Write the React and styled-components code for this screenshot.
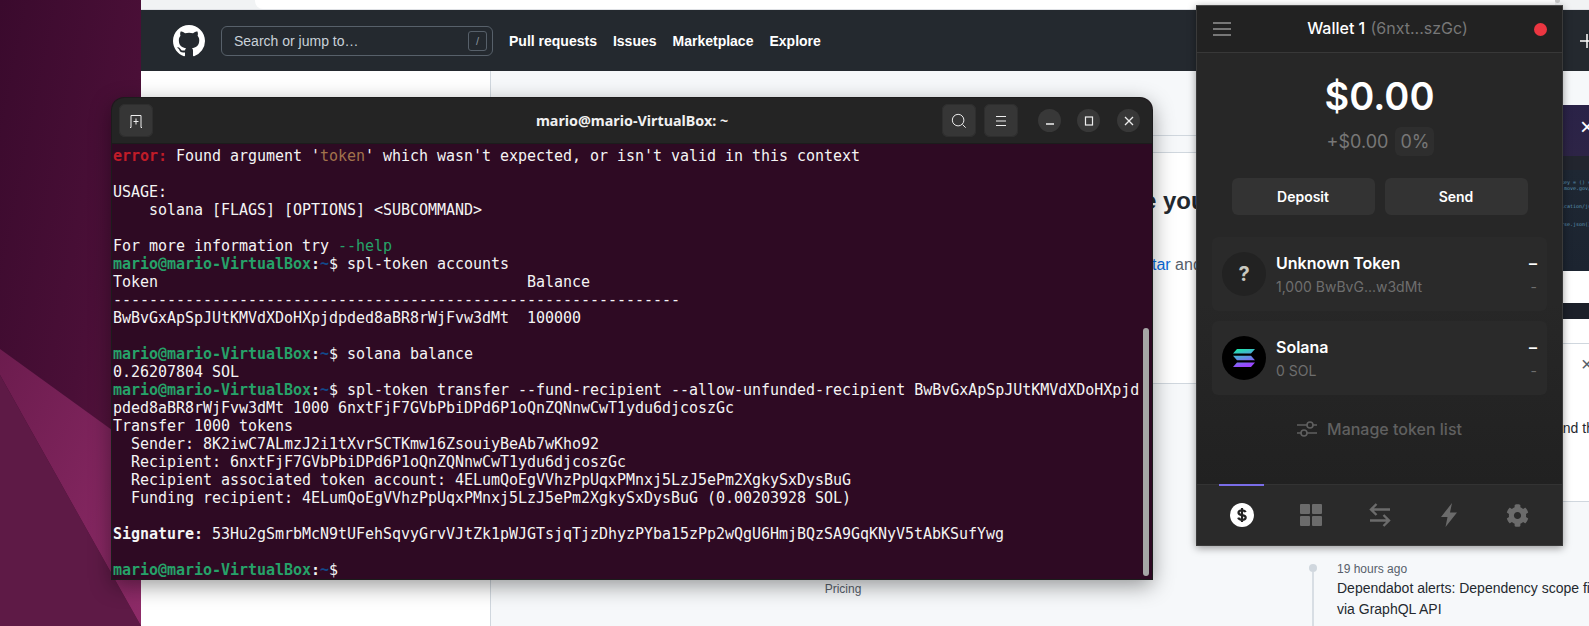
import React from "react";
import styled, { createGlobalStyle } from "styled-components";
import { FaCog } from "react-icons/fa";

const Global = createGlobalStyle`
  html, body { margin: 0; padding: 0; background: #fff; overflow: hidden; }
  * { box-sizing: border-box; }
`;

const Desktop = styled.div`
  position: relative;
  width: 1589px;
  height: 626px;
  overflow: hidden;
  display: flex;
  font-family: "Liberation Sans", Arial, sans-serif;
`;
const Wallpaper = styled.svg`
  flex: 0 0 141px;
  width: 141px;
  height: 626px;
  display: block;
`;
const Browser = styled.div`
  flex: 1;
  min-width: 0;
  display: flex;
  flex-direction: column;
  background: #fff;
`;
const TabStrip = styled.div`
  height: 10px;
  flex: none;
  display: flex;
  background: #f1f3f4;
  border-bottom: 1px solid #dfe1e5;
`;
const ActiveTab = styled.div`
  flex: 0 0 1300px;
  margin-left: 114px;
  background: #fff;
  border-bottom-left-radius: 8px;
`;
const AvatarEdge = styled.div`
  width: 19px;
  height: 3px;
  margin-left: auto;
  margin-right: 29px;
  background: #c9c9c9;
  border-radius: 0 0 10px 10px;
`;
const GitHubBar = styled.header`
  flex: none;
  height: 61px;
  background: #24292f;
  display: flex;
  align-items: center;
  padding: 0 0 0 32px;
`;
const SearchBox = styled.div`
  width: 272px;
  height: 30px;
  margin-left: 16px;
  margin-right: 16px;
  border: 1px solid #57606a;
  border-radius: 6px;
  display: flex;
  align-items: center;
  justify-content: space-between;
  padding: 0 5px 0 12px;
  color: #c9d1d9;
  font-size: 14px;
`;
const SlashKey = styled.span`
  width: 19px;
  height: 20px;
  border: 1px solid #57606a;
  border-radius: 3px;
  display: flex;
  align-items: center;
  justify-content: center;
  font-size: 11px;
  color: #8b949e;
`;
const NavLink = styled.a`
  color: #fff;
  font-size: 14px;
  font-weight: 700;
  margin-right: 16px;
  white-space: nowrap;
`;
const PlusIcon = styled.svg`
  margin-left: auto;
  margin-right: -6px;
  flex: none;
`;
const Content = styled.div`
  flex: 1;
  min-height: 0;
  display: flex;
`;
const Sidebar = styled.aside`
  flex: 0 0 350px;
  background: #fff;
  border-right: 1px solid #d0d7de;
`;
const Main = styled.main`
  flex: 1;
  min-width: 0;
  background: #f6f8fa;
  display: flex;
  overflow: hidden;
`;
const FeedColumn = styled.section`
  flex: 0 0 710px;
  min-width: 0;
  padding-top: 64px;
`;
const FeedStrip = styled.div`
  height: 17px;
  border-top: 1px solid #d0d7de;
`;
const FeedCard = styled.div`
  height: 232px;
  background: #fff;
  border-top: 1px solid #d0d7de;
  border-bottom: 1px solid #d0d7de;
  padding: 32px 0 0 652px;
  white-space: nowrap;
  overflow: hidden;
`;
const CardHeading = styled.h2`
  margin: 0;
  font-size: 24px;
  line-height: 32px;
  font-weight: 700;
  color: #24292f;
`;
const CardText = styled.p`
  margin: 36px 0 0 9px;
  font-size: 16px;
  line-height: 24px;
  color: #57606a;
`;
const CardLink = styled.a`
  color: #0969da;
`;
const PricingRow = styled.div`
  margin-top: 198px;
  padding-right: 6px;
  text-align: center;
  font-size: 12px;
  line-height: 14px;
  color: #57606a;
`;
const SideColumn = styled.section`
  flex: 0 0 400px;
  margin-left: 108px;
  padding-top: 34px;
`;
const PromoCard = styled.div`
  height: 397px;
  background: #fff;
  border-bottom: 1px solid #d0d7de;
`;
const PromoImage = styled.div`
  position: relative;
  height: 166px;
  background: linear-gradient(180deg, #2a2247 0%, #2d2446 31%, #22252e 31%, #22252e 39%, #1e2733 39%, #1c2430 100%);
`;
const PromoClose = styled.span`
  position: absolute;
  left: 271px;
  top: 10px;
  color: #fff;
  font-size: 24px;
  line-height: 24px;
`;
const PromoCode = styled.pre`
  margin: 0;
  position: absolute;
  left: 252px;
  top: 74px;
  font: 5px/6px "DejaVu Sans Mono", monospace;
  color: #5d95b5;
`;
const PromoBand = styled.div`
  height: 16px;
  margin-top: 32px;
  background: #1c2029;
`;
const PromoFoot = styled.div`
  height: 25px;
  border-bottom: 1px solid #d0d7de;
`;
const PromoBody = styled.div`
  display: flex;
  flex-direction: column;
  padding: 12px 0 0 246px;
  white-space: nowrap;
  font-size: 14px;
  color: #24292f;
`;
const PromoDismiss = styled.span`
  margin-left: 26px;
  height: 17px;
  font-size: 20px;
  line-height: 17px;
  color: #57606a;
`;
const PromoLine = styled.span`
  margin-top: 47px;
  line-height: 17px;
`;
const Timeline = styled.div`
  margin-top: 60px;
  padding-left: 28px;
  position: relative;
  display: flex;
  flex-direction: column;
  white-space: nowrap;
`;
const TimelineDot = styled.i`
  position: absolute;
  left: 0;
  top: 2px;
  width: 8px;
  height: 8px;
  border-radius: 50%;
  background: #d0d7de;
  &::after {
    content: "";
    position: absolute;
    left: 3px;
    top: 8px;
    width: 2px;
    height: 70px;
    background: #d8dee4;
  }
`;
const TimeAgo = styled.span`
  font-size: 12px;
  line-height: 14px;
  color: #57606a;
`;
const TimelineText = styled.span`
  margin-top: 2px;
  font-size: 14px;
  line-height: 21px;
  color: #24292f;
`;

/* Terminal window */
const TerminalWindow = styled.div`
  position: absolute;
  left: 112px;
  top: 98px;
  width: 1040px;
  height: 481px;
  display: flex;
  flex-direction: column;
  border-radius: 12px 12px 0 0;
  overflow: hidden;
  background: #2e0a23;
  box-shadow: 0 0 0 1px #1c1c1c, 0 6px 22px rgba(0, 0, 0, 0.42);
`;
const TermBar = styled.div`
  flex: none;
  height: 46px;
  background: #242424;
  border-bottom: 1px solid #1c1c1c;
  display: flex;
  align-items: center;
  padding: 0 12px 0 7px;
`;
const TermButton = styled.span`
  width: ${(p) => p.$w}px;
  height: 33px;
  margin-left: ${(p) => p.$gap || 0}px;
  border-radius: 6px;
  background: #363636;
  box-shadow: inset 0 0 0 1px #2e2e2e;
  display: flex;
  align-items: center;
  justify-content: center;
  flex: none;
`;
const TermTitle = styled.div`
  flex: 1;
  text-align: center;
  padding-left: 169px;
  color: #f0f0f0;
  font: 700 14.3px "Noto Sans", sans-serif;
`;
const WinCircle = styled.span`
  width: 23px;
  height: 23px;
  border-radius: 50%;
  background: #383838;
  margin-left: ${(p) => p.$gap}px;
  display: flex;
  align-items: center;
  justify-content: center;
  flex: none;
`;
const TermBody = styled.pre`
  position: relative;
  flex: 1;
  margin: 0;
  padding: 3px 0 0 1px;
  font-family: "DejaVu Sans Mono", monospace;
  font-size: 15px;
  letter-spacing: -0.03px;
  line-height: 18px;
  color: #f4f4f4;
  overflow: hidden;
`;
const Green = styled.b`
  color: #26a269;
`;
const Blue = styled.b`
  color: #12488b;
`;
const Red = styled.b`
  color: #c01c28;
`;
const Brown = styled.span`
  color: #a2734c;
`;
const HelpFlag = styled.span`
  color: #26a269;
`;
const Scrollbar = styled.div`
  position: absolute;
  right: 3px;
  top: 184px;
  width: 6px;
  height: 248px;
  border-radius: 3px;
  background: #a6a6a6;
`;

/* Wallet window */
const WalletWindow = styled.div`
  position: absolute;
  left: 1196px;
  top: 5px;
  width: 367px;
  height: 541px;
  display: flex;
  flex-direction: column;
  background: linear-gradient(180deg, #272727 0%, #272727 55%, #1f1f1f 100%);
  border: 1px solid #3a3a3a;
  border-top-color: #4a4a4a;
  box-shadow: 0 2px 8px rgba(0, 0, 0, 0.4);
  font-family: Inter, "Noto Sans", sans-serif;
`;
const WalletHeader = styled.div`
  flex: none;
  height: 47px;
  background: #222;
  border-bottom: 1px solid #383838;
  display: flex;
  align-items: center;
  justify-content: space-between;
  padding: 0 15px 0 16px;
`;
const Burger = styled.span`
  width: 18px;
  height: 14px;
  border-top: 2px solid #777;
  border-bottom: 2px solid #777;
  position: relative;
  &::after {
    content: "";
    position: absolute;
    left: 0;
    right: 0;
    top: 4px;
    height: 2px;
    background: #777;
  }
`;
const WalletName = styled.div`
  font-size: 16px;
  font-weight: 500;
  color: #fff;
  margin-left: 10px;
  margin-top: -2px;
`;
const WalletAddr = styled.span`
  color: #777;
  font-weight: 400;
  margin-left: 1px;
`;
const StatusDot = styled.span`
  width: 13px;
  height: 13px;
  border-radius: 50%;
  background: #ec3641;
`;
const WalletBody = styled.div`
  flex: 1;
  min-height: 0;
  display: flex;
  flex-direction: column;
  align-items: center;
  padding: 20px 15px 0;
`;
const Balance = styled.div`
  font-size: 38px;
  line-height: 46px;
  font-weight: 600;
  color: #fff;
`;
const Delta = styled.div`
  margin-top: 8px;
  margin-left: 2px;
  height: 29px;
  display: flex;
  align-items: center;
  gap: 7px;
  font-size: 18px;
  color: #777;
`;
const DeltaBadge = styled.span`
  height: 29px;
  padding: 0 5px;
  border-radius: 6px;
  background: #2e2e2e;
  display: flex;
  align-items: center;
`;
const ActionRow = styled.div`
  margin-top: 22px;
  display: flex;
  gap: 10px;
`;
const ActionButton = styled.button`
  width: 143px;
  height: 37px;
  border: 0;
  border-radius: 6px;
  background: #333;
  color: #fff;
  font: 600 14px Inter, sans-serif;
`;
const TokenList = styled.div`
  margin-top: 22px;
  align-self: stretch;
  display: flex;
  flex-direction: column;
  gap: 10px;
`;
const TokenRow = styled.div`
  height: 74px;
  border-radius: 6px;
  background: #2a2a2a;
  display: flex;
  align-items: center;
  padding: 0 10px;
`;
const TokenIcon = styled.span`
  width: 44px;
  height: 44px;
  border-radius: 50%;
  flex: none;
  background: ${(p) => (p.$dark ? "#000" : "#222")};
  color: #c8c8c0;
  font-size: 20px;
  font-weight: 700;
  display: flex;
  align-items: center;
  justify-content: center;
`;
const TokenText = styled.div`
  flex: 1;
  margin-left: 10px;
  padding-top: 2px;
  display: flex;
  flex-direction: column;
  gap: 4px;
`;
const TokenTitle = styled.span`
  color: #fff;
  font-size: 16px;
  line-height: 20px;
  font-weight: 600;
`;
const TokenSub = styled.span`
  color: #6e6e6e;
  font-size: 14px;
  line-height: 20px;
`;
const TokenValues = styled.div`
  padding-top: 2px;
  display: flex;
  flex-direction: column;
  align-items: flex-end;
  gap: 4px;
`;
const ManageLink = styled.div`
  margin-top: 24px;
  display: flex;
  align-items: center;
  gap: 10px;
  color: #606060;
  font-size: 16px;
  font-weight: 500;
  line-height: 20px;
`;
const WalletTabs = styled.nav`
  flex: none;
  height: 61px;
  background: #2a2a2a;
  border-top: 1px solid #333;
  display: grid;
  grid-template-columns: repeat(5, 69px);
  padding-left: 10px;
`;
const WalletTab = styled.span`
  position: relative;
  display: flex;
  align-items: center;
  justify-content: center;
  color: #6b6b6b;
  &::before {
    content: "";
    display: ${(p) => (p.$active ? "block" : "none")};
    position: absolute;
    top: -1px;
    left: 12px;
    width: 45px;
    height: 2px;
    background: #7a6de8;
  }
`;

const Prompt = () => (
  <>
    <Green>mario@mario-VirtualBox</Green>
    <b>:</b>
    <Blue>~</Blue>$
  </>
);

const logo =
  "M8 0C3.58 0 0 3.58 0 8c0 3.54 2.29 6.53 5.47 7.59.4.07.55-.17.55-.38 0-.19-.01-.82-.01-1.49-2.01.37-2.53-.49-2.69-.94-.09-.23-.48-.94-.82-1.13-.28-.15-.68-.52-.01-.53.63-.01 1.08.58 1.23.82.72 1.21 1.87.87 2.33.66.07-.52.28-.87.51-1.07-1.78-.2-3.64-.89-3.64-3.95 0-.87.31-1.59.82-2.15-.08-.2-.36-1.02.08-2.12 0 0 .67-.21 2.2.82.64-.18 1.32-.27 2-.27.68 0 1.36.09 2 .27 1.53-1.04 2.2-.82 2.2-.82.44 1.1.16 1.92.08 2.12.51.56.82 1.27.82 2.15 0 3.07-1.87 3.75-3.65 3.95.29.25.54.73.54 1.48 0 1.07-.01 1.93-.01 2.2 0 .21.15.46.55.38A8.013 8.013 0 0016 8c0-4.42-3.58-8-8-8z";

const SolanaMark = () => (
  <svg width="22" height="20" viewBox="0 0 22 20">
    <defs>
      <linearGradient id="sol" x1="0" y1="0" x2="0.3" y2="1">
        <stop offset="0" stopColor="#14f1a0" />
        <stop offset="0.45" stopColor="#4fa8d8" />
        <stop offset="1" stopColor="#9a45ff" />
      </linearGradient>
    </defs>
    <path d="M4 1h18l-4 4.4H0zM0 7.8h18l4 4.4H4zM4 14.6h18l-4 4.4H0z" fill="url(#sol)" />
  </svg>
);

const App = () => (
  <Desktop>
    <Global />
    <Wallpaper viewBox="0 0 141 626">
      <defs>
        <linearGradient id="wpTop" x1="0" y1="0" x2="1" y2="0.9">
          <stop offset="0" stopColor="#3a0a2d" />
          <stop offset="0.6" stopColor="#4a0f37" />
          <stop offset="1" stopColor="#5c1641" />
        </linearGradient>
        <linearGradient id="wpBeam" x1="0" y1="0" x2="1" y2="1">
          <stop offset="0" stopColor="#6c1c4e" />
          <stop offset="1" stopColor="#8e2b68" />
        </linearGradient>
      </defs>
      <rect width="141" height="626" fill="url(#wpTop)" />
      <path d="M0 349L141 451V626L0 375Z" fill="url(#wpBeam)" />
      <path d="M0 375L141 626H0Z" fill="#5e1a46" />
    </Wallpaper>
    <Browser>
      <TabStrip>
        <ActiveTab />
        <AvatarEdge />
      </TabStrip>
      <GitHubBar>
        <svg width="32" height="32" viewBox="0 0 16 16" fill="#fff">
          <path d={logo} />
        </svg>
        <SearchBox>
          Search or jump to…
          <SlashKey>/</SlashKey>
        </SearchBox>
        <NavLink>Pull requests</NavLink>
        <NavLink>Issues</NavLink>
        <NavLink>Marketplace</NavLink>
        <NavLink>Explore</NavLink>
        <PlusIcon width="16" height="16" viewBox="0 0 16 16" fill="none" stroke="#fff" strokeWidth="1.5">
          <path d="M8 1v14M1 8h14" />
        </PlusIcon>
      </GitHubBar>
      <Content>
        <Sidebar />
        <Main>
          <FeedColumn>
            <FeedStrip />
            <FeedCard>
              <CardHeading>e your</CardHeading>
              <CardText>
                <CardLink>tar</CardLink> and
              </CardText>
            </FeedCard>
            <PricingRow>Pricing</PricingRow>
          </FeedColumn>
          <SideColumn>
            <PromoCard>
              <PromoImage>
                <PromoClose>×</PromoClose>
                <PromoCode>{"key = () =\n.move.gov/\n\n\nication/js\n\n\nrse.json()"}</PromoCode>
              </PromoImage>
              <PromoBand />
              <PromoFoot />
              <PromoBody>
                <PromoDismiss>×</PromoDismiss>
                <PromoLine>and the</PromoLine>
              </PromoBody>
            </PromoCard>
            <Timeline>
              <TimelineDot />
              <TimeAgo>19 hours ago</TimeAgo>
              <TimelineText>
                Dependabot alerts: Dependency scope filter
                <br />
                via GraphQL API
              </TimelineText>
            </Timeline>
          </SideColumn>
        </Main>
      </Content>
    </Browser>

    <TerminalWindow>
      <TermBar>
        <TermButton $w={34}>
          <svg width="16" height="16" viewBox="0 0 16 16" fill="none" stroke="#eee" strokeWidth="1">
            <path d="M2 14.500h1V2.500h10v12h1M8 5.500v6M5.500 8.500h5" />
          </svg>
        </TermButton>
        <TermTitle>mario@mario-VirtualBox: ~</TermTitle>
        <TermButton $w={34}>
          <svg width="16" height="16" viewBox="0 0 18 18" fill="none" stroke="#eee" strokeWidth="1.1">
            <circle cx="8" cy="8" r="6.500" />
            <path d="M13 13L16.500 16.500" />
          </svg>
        </TermButton>
        <TermButton $w={34} $gap={8}>
          <svg width="14" height="14" viewBox="0 0 14 14" stroke="#eee" strokeWidth="1.2">
            <path d="M2 2.500h10M2 7h10M2 11.500h10" />
          </svg>
        </TermButton>
        <WinCircle $gap={20}>
          <svg width="10" height="10" viewBox="0 0 10 10" stroke="#eee" strokeWidth="1.3">
            <path d="M1 8h8" />
          </svg>
        </WinCircle>
        <WinCircle $gap={16}>
          <svg width="10" height="10" viewBox="0 0 10 10" fill="none" stroke="#eee" strokeWidth="1.2">
            <rect x="1.500" y="1" width="7" height="8" />
          </svg>
        </WinCircle>
        <WinCircle $gap={17}>
          <svg width="10" height="10" viewBox="0 0 10 10" stroke="#eee" strokeWidth="1.3">
            <path d="M1 1l8 8M9 1l-8 8" />
          </svg>
        </WinCircle>
      </TermBar>
      <TermBody>
        <Red>error:</Red> Found argument '<Brown>token</Brown>' which wasn't expected, or isn't valid in this context{"\n"}
        {"\n"}
        USAGE:{"\n"}
        {"    solana [FLAGS] [OPTIONS] <SUBCOMMAND>\n"}
        {"\n"}
        For more information try <HelpFlag>--help</HelpFlag>{"\n"}
        <Prompt /> spl-token accounts{"\n"}
        {"Token                                         Balance\n"}
        {"---------------------------------------------------------------\n"}
        {"BwBvGxApSpJUtKMVdXDoHXpjdpded8aBR8rWjFvw3dMt  100000\n"}
        {"\n"}
        <Prompt /> solana balance{"\n"}
        0.26207804 SOL{"\n"}
        <Prompt /> spl-token transfer --fund-recipient --allow-unfunded-recipient BwBvGxApSpJUtKMVdXDoHXpjd{"\n"}
        pded8aBR8rWjFvw3dMt 1000 6nxtFjF7GVbPbiDPd6P1oQnZQNnwCwT1ydu6djcoszGc{"\n"}
        Transfer 1000 tokens{"\n"}
        {"  Sender: 8K2iwC7ALmzJ2i1tXvrSCTKmw16ZsouiyBeAb7wKho92\n"}
        {"  Recipient: 6nxtFjF7GVbPbiDPd6P1oQnZQNnwCwT1ydu6djcoszGc\n"}
        {"  Recipient associated token account: 4ELumQoEgVVhzPpUqxPMnxj5LzJ5ePm2XgkySxDysBuG\n"}
        {"  Funding recipient: 4ELumQoEgVVhzPpUqxPMnxj5LzJ5ePm2XgkySxDysBuG (0.00203928 SOL)\n"}
        {"\n"}
        <b>Signature:</b> 53Hu2gSmrbMcN9tUFehSqvyGrvVJtZk1pWJGTsjqTjzDhyzPYba15zPp2wQgU6HmjBQzSA9GqKNyV5tAbKSufYwg{"\n"}
        {"\n"}
        <Prompt />
        <Scrollbar />
      </TermBody>
    </TerminalWindow>

    <WalletWindow>
      <WalletHeader>
        <Burger />
        <WalletName>
          Wallet 1 <WalletAddr>(6nxt...szGc)</WalletAddr>
        </WalletName>
        <StatusDot />
      </WalletHeader>
      <WalletBody>
        <Balance>$0.00</Balance>
        <Delta>
          +$0.00
          <DeltaBadge>0%</DeltaBadge>
        </Delta>
        <ActionRow>
          <ActionButton>Deposit</ActionButton>
          <ActionButton>Send</ActionButton>
        </ActionRow>
        <TokenList>
          <TokenRow>
            <TokenIcon>?</TokenIcon>
            <TokenText>
              <TokenTitle>Unknown Token</TokenTitle>
              <TokenSub>1,000 BwBvG...w3dMt</TokenSub>
            </TokenText>
            <TokenValues>
              <TokenTitle>–</TokenTitle>
              <TokenSub>-</TokenSub>
            </TokenValues>
          </TokenRow>
          <TokenRow>
            <TokenIcon $dark>
              <SolanaMark />
            </TokenIcon>
            <TokenText>
              <TokenTitle>Solana</TokenTitle>
              <TokenSub>0 SOL</TokenSub>
            </TokenText>
            <TokenValues>
              <TokenTitle>–</TokenTitle>
              <TokenSub>-</TokenSub>
            </TokenValues>
          </TokenRow>
        </TokenList>
        <ManageLink>
          <svg width="20" height="20" viewBox="0 0 20 20" fill="none" stroke="#606060" strokeWidth="1.6">
            <path d="M0 6h10M16 6h4M0 14h4M10 14h10" />
            <circle cx="13" cy="6" r="3" />
            <circle cx="7" cy="14" r="3" />
          </svg>
          Manage token list
        </ManageLink>
      </WalletBody>
      <WalletTabs>
        <WalletTab $active>
          <svg width="24" height="24" viewBox="0 0 24 24" fill="none">
            <circle cx="12" cy="12" r="12" fill="#fff" />
            <path d="M15.6 9.2c-.5-1.3-1.9-1.9-3.6-1.9-2 0-3.5.9-3.5 2.4 0 3.4 7.2 1.5 7.2 4.8 0 1.5-1.6 2.3-3.7 2.3-1.9 0-3.3-.7-3.8-2.1M12 5v14" stroke="#222" strokeWidth="2.2" />
          </svg>
        </WalletTab>
        <WalletTab>
          <svg width="22" height="22" viewBox="0 0 22 22" fill="currentColor">
            <rect width="10" height="10" rx="1" />
            <rect x="12" width="10" height="10" rx="1" />
            <rect y="12" width="10" height="10" rx="1" />
            <rect x="12" y="12" width="10" height="10" rx="1" />
          </svg>
        </WalletTab>
        <WalletTab>
          <svg width="24" height="24" viewBox="0 0 24 24" fill="none" stroke="currentColor" strokeWidth="2.4">
            <path d="M22 6.500H3M8.500 1L3 6.500 8.500 12M2 17.500h19M15.500 12l5.500 5.500-5.500 5.500" />
          </svg>
        </WalletTab>
        <WalletTab>
          <svg width="16" height="24" viewBox="0 0 16 24" fill="currentColor">
            <path d="M11 0L0 14h6.500L4.500 24 16 9.500H9z" />
          </svg>
        </WalletTab>
        <WalletTab>
          <FaCog size={23} />
        </WalletTab>
      </WalletTabs>
    </WalletWindow>
  </Desktop>
);

export default App;
